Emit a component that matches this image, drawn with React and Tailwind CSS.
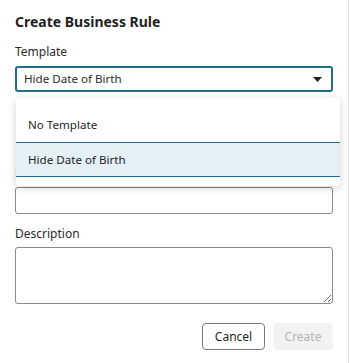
export default function App() {
  return (
    <div
      className="w-[349px] h-[363px] border-r border-[#e4e4e4] bg-white text-[#2b2b2b]"
      style={{ fontFamily: '"Noto Sans", "Open Sans", sans-serif' }}
    >
      <div className="px-[15px] pt-[12px] relative">
        <h1 className="text-[14px] font-bold leading-[20px] text-[#1f1f1f]">Create Business Rule</h1>

        <label className="block mt-[12px] text-[12px] leading-[16px]">Template</label>
        <div className="relative mt-[6px]">
          <div className="h-[26px] w-[318px] rounded-[3px] border-2 border-[#1f6f8b] flex items-center justify-between pl-[7px] pr-[8px] text-[11.6px]">
            <span>Hide Date of Birth</span>
            <svg width="9" height="5" viewBox="0 0 9 5" className="mr-[1px]">
              <path d="M0 0h9L4.5 5z" fill="#222" />
            </svg>
          </div>

          <div className="absolute left-[1px] top-[32px] w-[324px] z-10 bg-white rounded-[4px] py-[9px] shadow-[0_2px_8px_rgba(0,0,0,0.18)]">
            <div className="h-[35px] flex items-center pl-[12px] text-[11.6px] text-[#1f1f1f]">No Template</div>
            <div className="h-[35px] flex items-center pl-[12px] text-[11.6px] text-[#1f1f1f] bg-[#e4f0f6] border-y border-[#1f6f8b]">
              Hide Date of Birth
            </div>
          </div>
        </div>

        <label className="block mt-[74px] text-[12px] leading-[16px]">Name</label>
        <input className="block mt-[5px] h-[27px] w-[318px] rounded-[3px] border border-[#8a8a8a] outline-none" />

        <label className="block mt-[12px] text-[12px] leading-[16px]">Description</label>
        <textarea className="block mt-[5px] h-[57px] w-[318px] rounded-[3px] border border-[#8a8a8a] outline-none" />

        <div className="flex justify-end gap-[8px] mt-[19px] w-[318px]">
          <button className="h-[27px] w-[63px] rounded-[4px] border border-[#7a7a7a] text-[12px] text-[#1f1f1f] bg-white">
            Cancel
          </button>
          <button className="h-[27px] w-[60px] rounded-[4px] bg-[#f2f2f2] text-[12px] text-[#b3b3b3]">
            Create
          </button>
        </div>
      </div>
    </div>
  );
}
